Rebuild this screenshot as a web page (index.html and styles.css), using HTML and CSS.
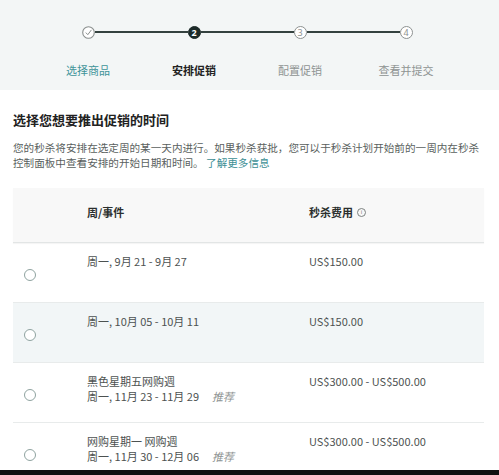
FILE: index.html
```html
<!DOCTYPE html>
<html lang="zh">
<head>
<meta charset="utf-8">
<link rel="stylesheet" href="styles.css">
</head>
<body>
<div class="page">
  <div class="top">
    <div class="steps">
      <div class="step done">
        <div class="track"><span class="dot"><svg width="13" height="13" viewBox="0 0 13 13"><circle cx="6.5" cy="6.5" r="5.8" fill="#fff" stroke="#8a8f8e" stroke-width="1.1"/><path d="M3.8 6.6 L5.8 8.7 L9.4 3.9" fill="none" stroke="#8a8f8e" stroke-width="1"/></svg></span></div>
        <div class="label">选择商品</div>
      </div>
      <div class="step current">
        <div class="track"><span class="dot num">2</span></div>
        <div class="label">安排促销</div>
      </div>
      <div class="step">
        <div class="track"><span class="dot num">3</span></div>
        <div class="label">配置促销</div>
      </div>
      <div class="step">
        <div class="track"><span class="dot num">4</span></div>
        <div class="label">查看并提交</div>
      </div>
    </div>
  </div>
  <div class="content">
    <h1 class="title">选择您想要推出促销的时间</h1>
    <p class="desc">您的秒杀将安排在选定周的某一天内进行。如果秒杀获批，您可以于秒杀计划开始前的一周内在秒杀控制面板中查看安排的开始日期和时间。 <span class="link">了解更多信息</span></p>
    <div class="table">
      <div class="row head">
        <div class="c-radio"></div>
        <div class="c-week">周/事件</div>
        <div class="c-fee">秒杀费用 <span class="info">i</span></div>
      </div>
      <div class="row">
        <div class="c-radio"><span class="radio"></span></div>
        <div class="c-week">周一, 9月 21 - 9月 27</div>
        <div class="c-fee">US$150.00</div>
      </div>
      <div class="row alt">
        <div class="c-radio"><span class="radio"></span></div>
        <div class="c-week">周一, 10月 05 - 10月 11</div>
        <div class="c-fee">US$150.00</div>
      </div>
      <div class="row">
        <div class="c-radio"><span class="radio"></span></div>
        <div class="c-week">黑色星期五网购週<br>周一, 11月 23 - 11月 29<span class="rec">推荐</span></div>
        <div class="c-fee">US$300.00 - US$500.00</div>
      </div>
      <div class="row last">
        <div class="c-radio"><span class="radio"></span></div>
        <div class="c-week">网购星期一 网购週<br>周一, 11月 30 - 12月 06<span class="rec">推荐</span></div>
        <div class="c-fee">US$300.00 - US$500.00</div>
      </div>
    </div>
  </div>
  <div class="bar"></div>
</div>
</body>
</html>
```

FILE: styles.css
```css
* { box-sizing: border-box; }
html, body { margin: 0; padding: 0; background: #fff; }
body { font-family: "Noto Sans CJK SC", "Noto Sans", sans-serif; color: #555; }
.page { width: 499px; height: 475px; overflow: hidden; display: flex; flex-direction: column; }
.page > * { flex: none; }

.top { background: #f3f6f6; height: 90px; padding-top: 25px; }
.steps { display: flex; padding-left: 35px; }
.step { width: 106px; display: flex; flex-direction: column; align-items: center; }
.track { width: 100%; height: 14px; display: flex; align-items: center; }
.track::before, .track::after { content: ""; flex: 1; height: 2px; background: #34423f; }
.step:first-child .track::before, .step:last-child .track::after { visibility: hidden; }
.dot { width: 13px; height: 13px; display: flex; align-items: center; justify-content: center; flex: none; }
.dot.num { border-radius: 50%; border: 1.1px solid #8d9291; background: #fff; color: #8d9291; font-size: 9px; line-height: 1; font-family: "Noto Sans", sans-serif; }
.current .dot.num { background: #1d2b29; border-color: #1d2b29; color: #fff; font-weight: 700; }
.label { margin-top: 23px; font-size: 11px; line-height: 16px; color: #8e9392; }
.done .label { color: #3f9499; }
.current .label { color: #222; font-weight: 700; }

.content { padding: 21px 15px 0 13px; }
.title { margin: 0; font-size: 13px; line-height: 18px; font-weight: 700; color: #222; }
.desc { margin: 11px 0 0; font-size: 10.6px; line-height: 15px; color: #5a5f5e; }
.link { color: #3d8f95; }

.table { margin-top: 18px; }
.row { display: flex; align-items: flex-start; min-height: 60px; padding-top: 11px; border-bottom: 1px solid #e8ebeb; font-size: 11px; line-height: 15px; color: #4d5251; }
.row.head { background: #f8f8f8; min-height: 55px; padding-top: 17px; color: #2b2f2e; font-weight: 700; border-bottom: 1px solid #e2e5e5; box-shadow: 0 1px 1px rgba(0,0,0,0.04); }
.row.alt { background: #f2f6f7; }
.row.last { min-height: 47px; border-bottom: none; }
.c-radio { width: 74px; flex: none; padding-left: 11px; }
.c-week { width: 222px; flex: none; }
.c-fee { flex: 1; display: flex; align-items: center; gap: 4px; }
.radio { display: block; width: 12px; height: 12px; margin-top: 15px; border-radius: 50%; border: 1.2px solid #8fa3a0; background: #fff; }
.info { width: 9px; height: 9px; border-radius: 50%; border: 1px solid #7d8281; font-size: 6px; line-height: 7px; text-align: center; color: #7d8281; font-weight: 400; font-family: "Noto Sans", sans-serif; }
.rec { margin-left: 13px; font-style: italic; color: #8e9392; }
.bar { height: 10px; background: #111; }
```
